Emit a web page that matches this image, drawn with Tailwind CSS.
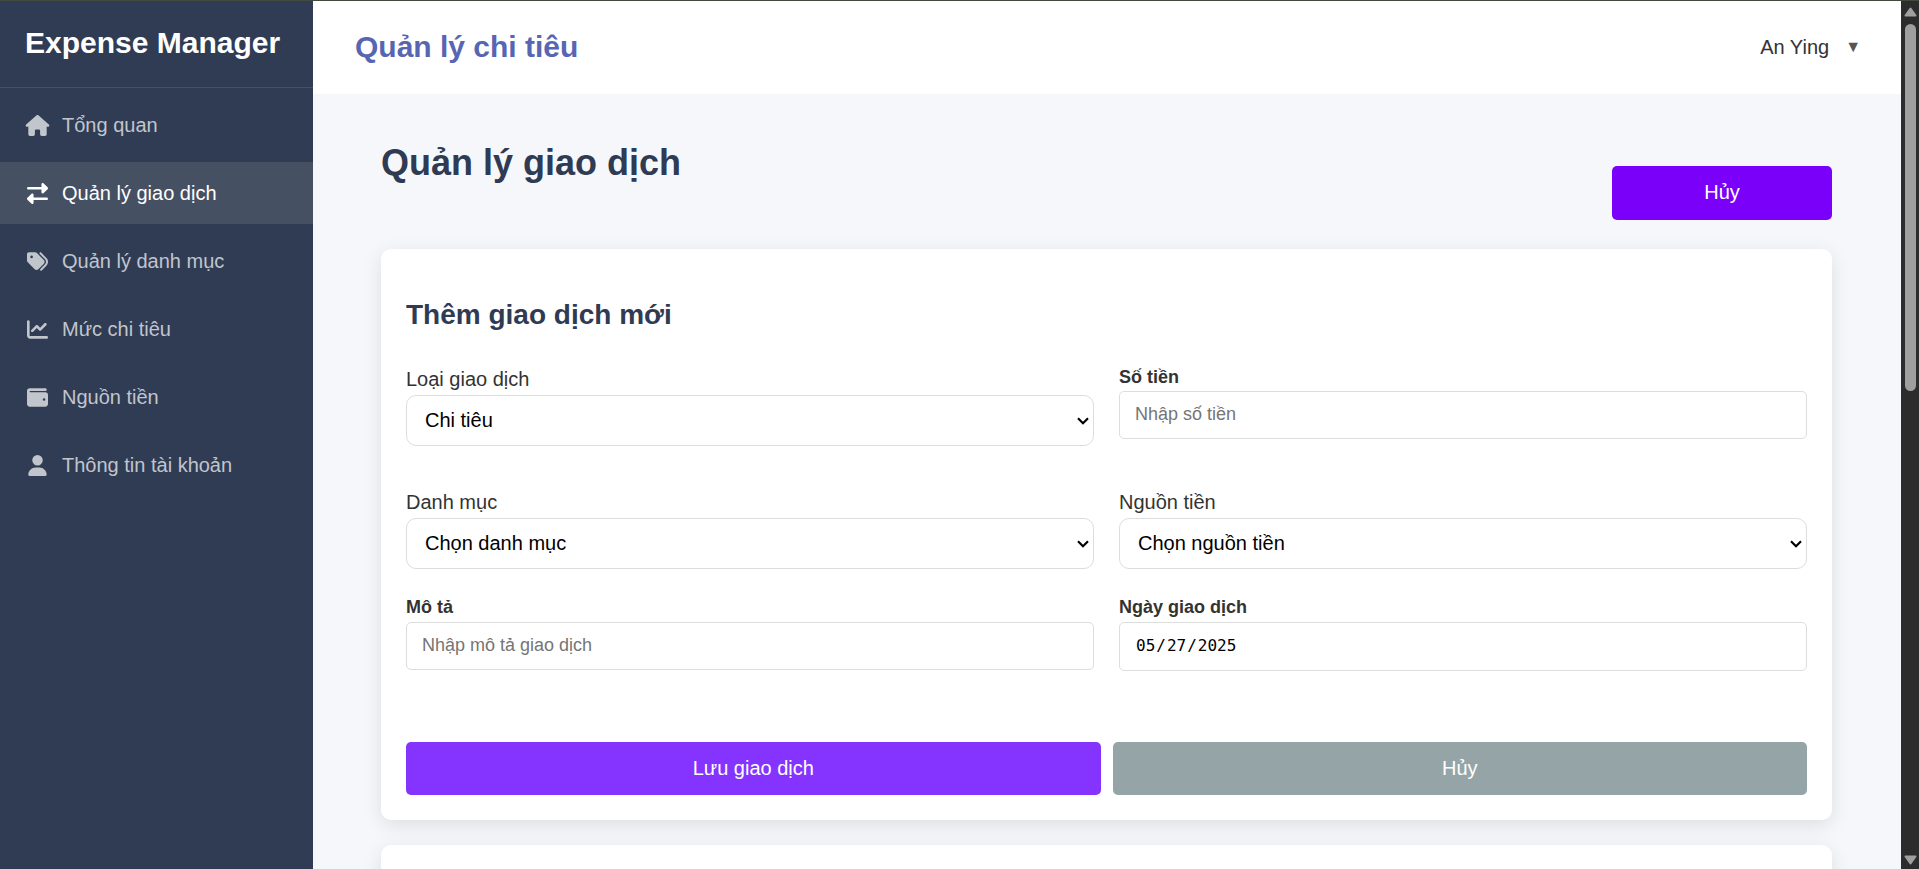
<!DOCTYPE html>
<html lang="vi">
<head>
<meta charset="utf-8">
<meta name="viewport" content="width=device-width, initial-scale=1">
<title>Expense Manager</title>
<script src="https://cdn.jsdelivr.net/npm/@tailwindcss/browser@4"></script>
</head>
<body class="flex h-screen overflow-hidden border-t border-[#424a3f] bg-[#f5f7fb] font-['Liberation_Sans',Arial,sans-serif] text-xl text-[#333]">
  <aside class="flex w-[313px] shrink-0 flex-col bg-[#303c54]">
    <div class="flex h-[87px] shrink-0 items-center border-b border-[#465168] px-[25px] pb-[2px]">
      <h2 class="text-[30px] font-bold text-white">Expense Manager</h2>
    </div>
    <nav class="flex flex-col gap-[6px] pt-[6px] text-[#c1c5cc]">
      <a href="#" class="flex h-[62px] items-center gap-[12px] px-[25px]">
        <svg class="h-[21px] w-[25px]" viewBox="0 0 576 512" fill="currentColor" aria-hidden="true"><path d="M575.8 255.5c0 18-15 32.1-32 32.1h-32l.7 160.2c0 2.7-.2 5.4-.5 8.1V472c0 22.1-17.9 40-40 40H456c-1.1 0-2.2 0-3.3-.1c-1.4 .1-2.8 .1-4.2 .1H416 392c-22.1 0-40-17.9-40-40V448 384c0-17.7-14.3-32-32-32H256c-17.7 0-32 14.3-32 32v64 24c0 22.1-17.9 40-40 40H160 128.1c-1.5 0-3-.1-4.5-.2c-1.2 .1-2.4 .2-3.6 .2H104c-22.1 0-40-17.9-40-40V360c0-.9 0-1.9 .1-2.8V287.6H32c-18 0-32-14-32-32.1c0-9 3-17 10-24L266.4 8c7-7 15-8 22-8s15 2 21 7L564.8 231.5c8 7 12 15 11 24z"/></svg>
        <span>Tổng quan</span>
      </a>
      <a href="#" class="flex h-[62px] items-center gap-[12px] bg-[#465063] px-[25px] text-white" aria-current="page">
        <svg class="h-[21px] w-[25px]" viewBox="0 0 512 512" fill="currentColor" aria-hidden="true"><path d="M32 96l320 0V32c0-12.9 7.8-24.6 19.8-29.6s25.7-2.2 34.9 6.9l96 96c6 6 9.4 14.1 9.4 22.6s-3.4 16.6-9.4 22.6l-96 96c-9.2 9.2-22.9 11.9-34.9 6.9s-19.8-16.6-19.8-29.6V160L32 160c-17.7 0-32-14.3-32-32s14.3-32 32-32zM480 352c17.7 0 32 14.3 32 32s-14.3 32-32 32H160v64c0 12.9-7.8 24.6-19.8 29.6s-25.7 2.2-34.9-6.9l-96-96c-6-6-9.4-14.1-9.4-22.6s3.4-16.6 9.4-22.6l96-96c9.2-9.2 22.9-11.9 34.9-6.9s19.8 16.6 19.8 29.6l0 64H480z"/></svg>
        <span>Quản lý giao dịch</span>
      </a>
      <a href="#" class="flex h-[62px] items-center gap-[12px] px-[25px]">
        <svg class="h-[21px] w-[25px]" viewBox="0 0 512 512" fill="currentColor" aria-hidden="true"><path d="M345 39.1L472.8 168.4c52.4 53 52.4 138.2 0 191.2L360.8 472.9c-9.3 9.4-24.5 9.5-33.9 .2s-9.5-24.5-.2-33.9L438.6 325.9c33.9-34.3 33.9-89.4 0-123.7L310.9 72.9c-9.3-9.4-9.2-24.6 .2-33.9s24.6-9.2 33.9 .2zM0 229.5V80C0 53.5 21.5 32 48 32H197.5c17 0 33.3 6.700 45.3 18.7l168 168c25 25 25 65.5 0 90.5L277.3 442.7c-25 25-65.500 25-90.500 0l-168-168C6.700 262.700 0 246.500 0 229.500zM144 144a32 32 0 1 0 -64 0 32 32 0 1 0 64 0z"/></svg>
        <span>Quản lý danh mục</span>
      </a>
      <a href="#" class="flex h-[62px] items-center gap-[12px] px-[25px]">
        <svg class="h-[21px] w-[25px]" viewBox="0 0 512 512" fill="currentColor" aria-hidden="true"><path d="M64 64c0-17.7-14.3-32-32-32S0 46.3 0 64V400c0 44.2 35.8 80 80 80H480c17.7 0 32-14.3 32-32s-14.3-32-32-32H80c-8.8 0-16-7.2-16-16V64zm406.6 86.6c12.5-12.5 12.5-32.8 0-45.3s-32.8-12.5-45.3 0L320 210.7l-57.4-57.4c-12.5-12.5-32.8-12.5-45.3 0l-112 112c-12.5 12.5-12.5 32.8 0 45.3s32.8 12.5 45.3 0L240 221.3l57.4 57.4c12.5 12.5 32.8 12.5 45.3 0l128-128z"/></svg>
        <span>Mức chi tiêu</span>
      </a>
      <a href="#" class="flex h-[62px] items-center gap-[12px] px-[25px]">
        <svg class="h-[21px] w-[25px]" viewBox="0 0 512 512" fill="currentColor" aria-hidden="true"><path d="M64 32C28.7 32 0 60.7 0 96V416c0 35.3 28.7 64 64 64H448c35.3 0 64-28.7 64-64V192c0-35.3-28.7-64-64-64H80c-8.8 0-16-7.2-16-16s7.2-16 16-16H448c17.7 0 32-14.3 32-32s-14.3-32-32-32H64zM416 272a32 32 0 1 1 0 64 32 32 0 1 1 0-64z"/></svg>
        <span>Nguồn tiền</span>
      </a>
      <a href="#" class="flex h-[62px] items-center gap-[12px] px-[25px]">
        <svg class="h-[21px] w-[25px]" viewBox="0 0 448 512" fill="currentColor" aria-hidden="true"><path d="M224 256A128 128 0 1 0 224 0a128 128 0 1 0 0 256zm-45.7 48C79.8 304 0 383.8 0 482.3C0 498.7 13.3 512 29.7 512H418.3c16.4 0 29.7-13.3 29.7-29.7C448 383.8 368.2 304 269.7 304H178.3z"/></svg>
        <span>Thông tin tài khoản</span>
      </a>
    </nav>
  </aside>

  <div class="flex min-w-0 flex-1 flex-col">
    <header class="flex h-[93px] shrink-0 items-center justify-between bg-white px-[40px] pb-[2px] pl-[42px]">
      <h1 class="text-[30px] font-bold text-[#5766b2]">Quản lý chi tiêu</h1>
      <button type="button" class="flex items-center gap-[16px]">
        <span>An Ying</span>
        <span class="text-base text-[#555]" aria-hidden="true">▼</span>
      </button>
    </header>

    <main class="flex flex-1 flex-col gap-[25px] overflow-hidden pt-[40px] pr-[69px] pl-[68px]">
      <div class="flex shrink-0 items-start justify-between pb-[4px]">
        <h2 class="pt-[4px] text-[36px] leading-[50px] font-bold text-[#2f3b53]">Quản lý giao dịch</h2>
        <button type="button" class="mt-[32px] h-[54px] w-[220px] rounded-[5px] bg-[#7b00f9] pb-[2px] text-white">Hủy</button>
      </div>

      <section class="shrink-0 rounded-[10px] bg-white p-[25px] shadow-[0_5px_19px_rgba(0,0,0,0.1)]">
        <h3 class="pt-[23px] text-[28px] leading-[36px] font-bold text-[#2f3b53]">Thêm giao dịch mới</h3>
        <form>
          <div class="grid grid-cols-2 gap-x-[25px] pt-[32px]">
            <div class="flex h-[123px] flex-col">
              <label for="type" class="h-[30px]">Loại giao dịch</label>
              <div class="relative">
                <select id="type" class="h-[51px] w-full appearance-none rounded-[10px] border border-[#ddd] bg-white px-[18px] pb-[2px] text-black"><option>Chi tiêu</option><option>Thu nhập</option></select>
                <svg class="pointer-events-none absolute top-[22px] right-[5px] h-[8px] w-[12px]" viewBox="0 0 12 8" fill="none" stroke="#000" stroke-width="2.200" aria-hidden="true"><path d="M1 1.300 6 6.200 11 1.300"/></svg>
              </div>
            </div>
            <div class="flex h-[123px] flex-col">
              <label for="amount" class="h-[26px] text-[18px] font-bold">Số tiền</label>
              <input id="amount" type="number" placeholder="Nhập số tiền" class="h-[48px] w-full rounded-[5px] border border-[#ddd] px-[15px] pb-[2px] text-[18px] text-black placeholder:text-[#757575]">
            </div>
            <div class="flex h-[104px] flex-col">
              <label for="category" class="h-[30px]">Danh mục</label>
              <div class="relative">
                <select id="category" class="h-[51px] w-full appearance-none rounded-[10px] border border-[#ddd] bg-white px-[18px] pb-[2px] text-black"><option>Chọn danh mục</option></select>
                <svg class="pointer-events-none absolute top-[22px] right-[5px] h-[8px] w-[12px]" viewBox="0 0 12 8" fill="none" stroke="#000" stroke-width="2.200" aria-hidden="true"><path d="M1 1.300 6 6.200 11 1.300"/></svg>
              </div>
            </div>
            <div class="flex h-[104px] flex-col">
              <label for="source" class="h-[30px]">Nguồn tiền</label>
              <div class="relative">
                <select id="source" class="h-[51px] w-full appearance-none rounded-[10px] border border-[#ddd] bg-white px-[18px] pb-[2px] text-black"><option>Chọn nguồn tiền</option></select>
                <svg class="pointer-events-none absolute top-[22px] right-[5px] h-[8px] w-[12px]" viewBox="0 0 12 8" fill="none" stroke="#000" stroke-width="2.200" aria-hidden="true"><path d="M1 1.300 6 6.200 11 1.300"/></svg>
              </div>
            </div>
            <div class="flex flex-col">
              <label for="note" class="h-[30px] pt-[3px] text-[18px] font-bold">Mô tả</label>
              <input id="note" type="text" placeholder="Nhập mô tả giao dịch" class="h-[48px] w-full rounded-[5px] border border-[#ddd] px-[15px] pb-[2px] text-[18px] text-black placeholder:text-[#757575]">
            </div>
            <div class="flex flex-col">
              <label for="date" class="h-[30px] pt-[3px] text-[18px] font-bold">Ngày giao dịch</label>
              <input id="date" type="date" lang="en-US" value="2025-05-27" class="h-[49px] w-full rounded-[5px] border border-[#ddd] px-[15px] font-['DejaVu_Sans_Mono',monospace] text-[16px] text-black [&::-webkit-calendar-picker-indicator]:hidden">
            </div>
          </div>
          <div class="grid grid-cols-2 gap-[12px] pt-[71px]">
            <button type="button" class="h-[53px] rounded-[5px] bg-[#8533ff] pb-[2px] text-white">Lưu giao dịch</button>
            <button type="button" class="h-[53px] rounded-[5px] bg-[#95a5a7] pb-[2px] text-white">Hủy</button>
          </div>
        </form>
      </section>

      <section class="h-[200px] shrink-0 rounded-[10px] bg-white shadow-[0_5px_19px_rgba(0,0,0,0.1)]"></section>
    </main>
  </div>

  <div class="flex w-[18px] shrink-0 flex-col items-center bg-[#2c2c2c] pt-[6px] pb-[4px]" aria-hidden="true">
    <svg class="h-[10px] w-[13px] shrink-0" viewBox="0 0 13 10"><path d="M6.500 1.500 11.500 8.500H1.500Z" fill="#9f9f9f" stroke="#9f9f9f" stroke-width="2" stroke-linejoin="round"/></svg>
    <div class="mt-[7px] h-[367px] w-[11px] shrink-0 rounded-full bg-[#9f9f9f]"></div>
    <svg class="mt-auto h-[10px] w-[13px] shrink-0" viewBox="0 0 13 10"><path d="M6.500 8.500 11.500 1.500H1.500Z" fill="#9f9f9f" stroke="#9f9f9f" stroke-width="2" stroke-linejoin="round"/></svg>
  </div>
</body>
</html>
